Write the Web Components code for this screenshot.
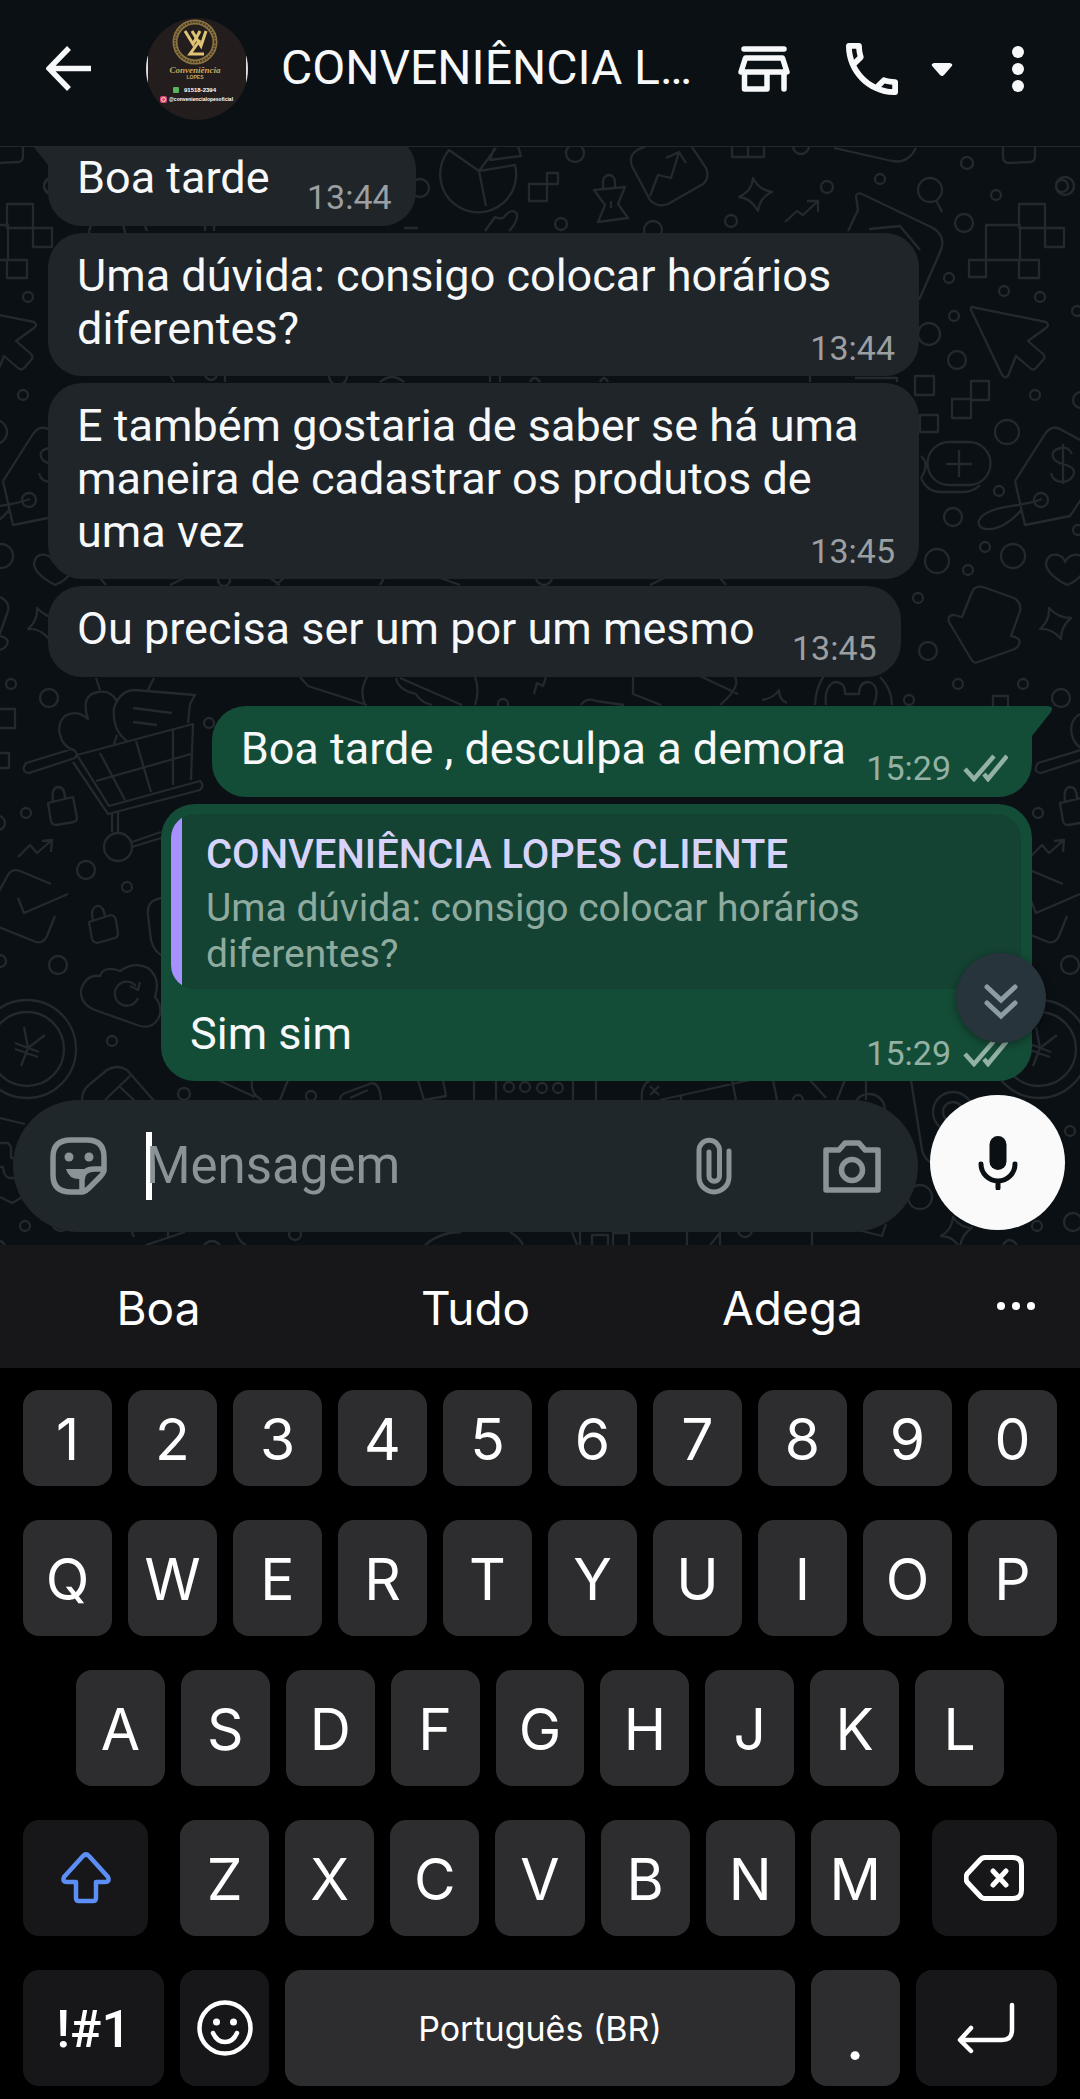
<!DOCTYPE html>
<html lang="pt-BR">
<head>
<meta charset="utf-8">
<meta name="viewport" content="width=device-width, initial-scale=1">
<title>Conversa</title>
<style>
    html, body {
        margin: 0;
        height: 100%;
        background: #000;
        color: #f7f8fa;
        font-family: Roboto, "Liberation Sans", sans-serif;
    }
</style>
</head>
<body>
<chat-app></chat-app>

<script>
const ICONS = {
    back: [45, 45, '<path d="M23 2 3 22.5 23 43M4 22.5H45" fill="none" stroke="currentColor" stroke-width="5.5"/>'],
    store: [52, 46, '<g fill="none" stroke="currentColor" stroke-width="5.5" stroke-linejoin="round" stroke-linecap="round"><path d="M6 3H46M7.5 12H44.5L49 26H3ZM6.5 26V43H29V26M46 28V43"/></g>'],
    phone: [52, 52, '<g transform="scale(2.89) translate(-3 -3)"><path fill="currentColor" d="M6.54 5c.06.89.21 1.76.45 2.59l-1.2 1.2c-.41-1.2-.67-2.47-.76-3.79h1.51m9.86 12.02c.85.24 1.72.39 2.6.45v1.49c-1.32-.09-2.59-.35-3.8-.75l1.2-1.19M7.5 3H4c-.55 0-1 .45-1 1 0 9.39 7.61 17 17 17 .55 0 1-.45 1-1v-3.49c0-.55-.45-1-1-1-1.24 0-2.45-.2-3.57-.57-.1-.04-.21-.05-.31-.05-.26 0-.51.1-.71.29l-2.2 2.2c-2.83-1.45-5.15-3.76-6.59-6.59l2.2-2.2c.28-.28.36-.67.25-1.02C8.7 6.45 8.5 5.25 8.5 4c0-.55-.45-1-1-1z"/></g>'],
    caret: [24, 16, '<path d="M4 2H20Q24 3 21 6L14 14Q12 16 10 14L3 6Q0 3 4 2Z" fill="currentColor"/>'],
    more: [12, 48, '<g fill="currentColor"><circle cx="6" cy="7" r="6"/><circle cx="6" cy="24" r="6"/><circle cx="6" cy="41" r="6"/></g>'],
    sticker: [58, 58, '<g fill="none" stroke="currentColor" stroke-width="5.5" stroke-linejoin="round"><path d="M21 3H37Q54 3 54 20V34Q53 37 50 40L39 51Q36 54 33 55H21Q3 55 3 38V20Q3 3 21 3ZM54 32H45Q32 32 32 43V54"/></g><circle cx="19" cy="20" r="4.5" fill="currentColor"/><circle cx="39" cy="20" r="4.5" fill="currentColor"/><path d="M16 32H38L31 42Q19 43 16 32Z" fill="currentColor"/>'],
    clip: [36, 58, '<path d="M33 14V40A15 15 0 0 1 3 40V13.5A10 10 0 0 1 23.5 13.5V39A5 5 0 0 1 13 39V15" fill="none" stroke="currentColor" stroke-width="5" stroke-linecap="round"/>'],
    camera: [58, 53, '<g fill="none" stroke="currentColor" stroke-width="5.5" stroke-linejoin="round"><path d="M3 10H16L22 3H36L42 10H55V50H3Z"/><circle cx="29" cy="30" r="10.5"/></g>'],
    mic: [40, 54, '<rect x="11.5" width="17" height="34" rx="8.5" fill="currentColor"/><path d="M3 28A17 17 0 0 0 37 28M20 45V52" fill="none" stroke="currentColor" stroke-width="5" stroke-linecap="round"/>'],
    ticks: [45, 28, '<g fill="none" stroke="currentColor" stroke-width="4.5"><path d="M2 15 11 25 31 2M21 20 25 25 44 2"/></g>'],
    down: [34, 37, '<path d="M3 4 17 17 31 4M3 20 17 33 31 20" fill="none" stroke="currentColor" stroke-width="5" stroke-linecap="round"/>'],
    dots: [40, 10, '<g fill="currentColor"><circle cx="5" cy="4" r="4"/><circle cx="20" cy="4" r="4"/><circle cx="35" cy="4" r="4"/></g>'],
    shift: [50, 52, '<path d="M22 4Q25 1 28 4L47 25Q49 30 44 30H35V46Q35 49 32 49H18Q15 49 15 46V30H6Q1 30 3 25Z" fill="none" stroke="currentColor" stroke-width="4.5" stroke-linejoin="round"/>'],
    erase: [60, 46, '<path d="M21 2.5H49Q57.5 2.5 57.5 11V35Q57.5 43.5 49 43.5H21Q18 43.5 16 41L3 27Q1 23 3 19L16 5Q18 2.5 21 2.5ZM29 16 42 30M42 16 29 30" fill="none" stroke="currentColor" stroke-width="5" stroke-linecap="round"/>'],
    smile: [56, 56, '<circle cx="28" cy="28" r="25.5" fill="none" stroke="currentColor" stroke-width="4.5"/><circle cx="19.500" cy="22" r="3.5" fill="currentColor"/><circle cx="36.5" cy="22" r="3.5" fill="currentColor"/><path d="M16 33Q20 42 28 42T40 33" fill="none" stroke="currentColor" stroke-width="4.5" stroke-linecap="round"/>'],
    enter: [58, 52, '<path d="M55 3V28Q55 38 45 38H4M14 26 3 38 14 49" fill="none" stroke="currentColor" stroke-width="4.5" stroke-linecap="round" stroke-linejoin="round"/>']
};

class BaseElement extends HTMLElement {
    constructor() {
        super();
        this._shadowDom = this.attachShadow({mode: 'open'});
    }

    connectedCallback() {
        this.render();
    }
}

class UiIcon extends BaseElement {
    render() {
        const [w, h, body] = ICONS[this.getAttribute('name')];
        this._shadowDom.innerHTML =
        `
        <style>
        :host { display: block; flex: none; }
        svg { display: block; }
        </style>
        <svg width="${w}" height="${h}" viewBox="0 0 ${w} ${h}" aria-hidden="true">${body}</svg>
        `;
    }
}

class ShopAvatar extends BaseElement {
    render() {
        this._shadowDom.innerHTML =
        `
        <style>
        :host { display: block; flex: none; }
        svg { display: block; border-radius: 50%; }
        text { font-family: "Liberation Sans", sans-serif; font-weight: bold; text-anchor: middle; fill: #fff; }
        .script { font-family: "Liberation Serif", serif; font-style: italic; fill: #c9a85c; }
        .gold { fill: #c9a85c; }
        </style>
        <svg width="102" height="102" viewBox="0 0 102 102" role="img" aria-label="Conveniência Lopes">
            <rect width="102" height="102" fill="#231e1d"/>
            <path d="M0 38H2V66H0ZM100 38H102V66H100Z" fill="#ddd"/>
            <circle cx="49" cy="24" r="20" fill="none" stroke="#8b7442" stroke-width="5"/>
            <circle cx="49" cy="24" r="20" fill="none" stroke="#4a3d25" stroke-width="2" stroke-dasharray="2 1"/>
            <path d="M39 13 47 26 54 13M46 13 55 28 60 13M54 22 44 36H58" fill="none" stroke="#e0c476" stroke-width="3"/>
            <text class="script" x="49" y="55" font-size="9">Conveniência</text>
            <text class="gold" x="49" y="61" font-size="5">LOPES</text>
            <rect x="27" y="69" width="6" height="6" rx="1" fill="#57b560"/>
            <text x="54" y="74" font-size="6">91518-2394</text>
            <rect x="14" y="78" width="7" height="7" rx="2" fill="#d6457e"/>
            <circle cx="17.500" cy="81.500" r="2" fill="none" stroke="#ffd9a0"/>
            <text x="55" y="83" font-size="5">@conveniencialopesoficial</text>
        </svg>
        `;
    }
}

class ChatHeader extends BaseElement {
    render() {
        this._shadowDom.innerHTML =
        `
        <style>
        :host {
            display: flex;
            align-items: center;
            flex: none;
            box-sizing: border-box;
            height: 147px;
            padding: 0 56px 9px 46px;
            background: #0b1014;
            border-bottom: 1px solid #22282b;
        }
        h1 {
            flex: 1;
            min-width: 0;
            margin: 0 24px 2px 33px;
            font-size: 48px;
            line-height: 56px;
            font-weight: 400;
            white-space: nowrap;
            overflow: hidden;
        }
        button {
            flex: none;
            display: flex;
            align-items: center;
            padding: 0;
            border: 0;
            background: none;
            color: inherit;
        }
        .back { margin-right: 55px; }
        .call { gap: 32px; margin: 0 58px 0 56px; }
        </style>
        <button class="back" aria-label="Voltar"><ui-icon name="back"></ui-icon></button>
        <shop-avatar></shop-avatar>
        <h1><slot></slot></h1>
        <button aria-label="Loja"><ui-icon name="store"></ui-icon></button>
        <button class="call" aria-label="Ligar"><ui-icon name="phone"></ui-icon><ui-icon name="caret"></ui-icon></button>
        <button aria-label="Mais"><ui-icon name="more"></ui-icon></button>
        `;
    }
}

// small round dots of the wallpaper: x, y, r
const DOTS = [
    [967, 163, 6], [996, 195, 5], [1065, 186, 9], [964, 223, 9], [949, 278, 5], [1004, 291, 5], [1040, 297, 5],
    [954, 316, 5], [929, 334, 11], [957, 360, 9], [1035, 395, 5], [1007, 432, 12], [999, 491, 5], [953, 517, 9],
    [985, 547, 5], [937, 561, 12], [968, 570, 5], [1013, 556, 12], [918, 598, 5], [928, 651, 9], [958, 684, 5],
    [1023, 684, 5], [909, 700, 5], [1061, 698, 9], [1077, 311, 5], [1081, 400, 8], [1078, 530, 5], [880, 179, 5],
    [930, 190, 12], [575, 153, 9], [801, 146, 8], [827, 187, 6], [731, 221, 6], [561, 224, 6], [653, 230, 9],
    [420, 188, 9], [1041, 500, 7], [26, 813, 5], [86, 870, 9], [127, 887, 5], [58, 965, 9], [112, 1041, 5],
    [184, 1094, 6], [209, 723, 5], [0, 961, 6], [-2, 823, 7], [118, 847, 14], [27, 1049, 49], [27, 1049, 37],
    [311, 1096, 5], [509, 1087, 5], [525, 1087, 5], [542, 1088, 5], [558, 1088, 5], [953, 1112, 20], [953, 1112, 10],
    [920, 1197, 12], [1070, 1131, 5], [1037, 1226, 5], [1073, 1222, 9], [503, 704, 5], [107, 234, 18], [338, 376, 9],
    [224, 580, 6], [544, 577, 8], [295, 1234, 6], [745, 1230, 7], [869, 1110, 16], [798, 1100, 5], [50, 186, 6]
];

const DOODLES = [
    // magnifier, pixel blocks, pointer
    'M936 200 942 212', 'M986 225h34v35h-34zM1019 204h26v24h-26zM1045 228h19v19h-19zM969 260h17v17h-17zM1019 260h20v18h-20z',
    'M972 307 1046 322Q1050 325 1046 328L1028 341 1043 354Q1046 357 1043 360L1036 368Q1033 371 1030 368L1016 356 1008 376Q1005 379 1002 375L971 310Q970 307 972 307Z',
    'M915 376h19v19h-19zM971 381h18v19h-18zM952 399h19v19h-19zM920 415h18v17h-18zM993 696h15v15h-15z',
    // plus pill
    'M949 442h20a21 21 0 0 1 0 43h-20a21 21 0 0 1 0-43zM946 464h26M959 450v27M921 456q9 8 0 22M921 478q6 14 20 14h22q10 0 17-7',
    // price tag
    'M1015 481 1045 434Q1051 425 1060 429L1082 441M1015 481 1025 525 1070 516 1082 498M1042 499C1020 508 995 504 981 517C970 532 1000 537 1022 509',
    'M1072 454q-4-8-11-6-10 2-8 9 2 5 10 7 12 3 11 9-2 8-11 9-10 0-12-9M1063 444v40',
    'M1067 585Q1046 574 1046 563 1048 553 1058 555 1064 557 1065 562 1070 553 1079 555 1089 560 1085 569 1080 580 1067 585',
    'M962 617 972 592Q975 585 983 587L1014 598Q1022 603 1020 611L1011 636Q1022 638 1019 644 1018 648 1012 650L978 662Q974 664 971 659L949 622Q947 615 954 615Z',
    'M1049 608Q1058 618 1071 618 1061 626 1061 639 1052 628 1040 629 1050 620 1049 608Z',
    // folded paper and the shapes under the header
    'M848 231 858 210 856 196Q857 192 862 194L933 228Q946 236 941 250L919 300M869 229 900 226 920 250',
    'M529 184h18v17h-18zM547 173h11v11h-11z',
    'M603 188v-6a6 7 0 0 1 12 0v6M594 190 625 187 618 204 628 218 598 222 605 205ZM611 201v7',
    'M645 147Q627 152 632 166L650 200Q658 208 668 204L703 184Q710 178 706 168L692 147M650 196 658 175 671 178 679 152M666 158 679 152 686 163',
    'M732 145v12h32v-12M748 145v12M834 148 892 161Q908 164 916 148M1003 146V158Q1004 163 1009 163L1031 162Q1035 161 1035 156V146',
    'M753 178Q759 190 772 192 760 197 758 211 751 198 739 197 752 191 753 178Z',
    'M785 222 797 211 803 215 818 201M807 201h11v11',
    'M449 150A38 38 0 1 0 515 165L479 171ZM479 171 486 206M479 171 496 148M494 148 490 160 521 156 518 146',
    'M485 231 495 217q6 3 9 0 q8-10 13-3 q1 8-8 17M404 228h14M205 225v6M214 225v6M145 226l2 5',
    'M170 375l4 7M205 376q6 8 12 0M225 375v7M380 382q12-10 24 0M490 375v7M500 375v7M530 382q4-8 10 0M600 382q4-8 8 0M810 375v7M855 378h42v4M100 578l6 7M170 585l14-7M270 578l10 7M284 578l-8 7M380 585l4-7M440 578l20 7M650 585l14-7M720 578l6 7',
    // strip above the first reply
    'M300 677 308 686 367 705M367 677q-8 14-2 28M396 678q2 12 20 16 4 8 16 11M400 678 462 705M475 677q5 14 0 28M534 694l3-11 6 3 3-9M633 676v18l28 11M700 676l38 18M735 677q6 10-15 28M581 705q5-8 15-4l28 4',
    'M762 700q12-2 17-10 0 10 8 13M815 705Q816 686 824 676M880 677q12 12 12 28M826 705q-2-18 8-23 12 0 11 12h14q0-12 10-12 12 4 5 23',
    // left column: heart, note, trolley
    'M75 751C58 745 55 725 65 716Q77 709 88 719 80 695 98 692 112 690 117 702M96 678 100 690M154 678 148 690',
    'M127 741Q112 730 114 708 120 690 135 690L195 695 190 704 188 723M133 708 172 713M133 722 157 725M117 735 114 744',
    'M77 755 193 724 191 780M77 755 109 806 200 781q5 4 0 9L108 814 73 762M100 753 125 800M136 741 151 792M173 730V785M96 781 191 754',
    'M26 763 72 749q7 3 3 9L29 773q-9-1-3-10zM112 813V832M118 812V832M132 842 161 832M132 847 161 838',
    'M48 803 73 797 77 818Q77 821 74 822L56 825Q52 825 51 821ZM53 801q-2-13 5-14 7 0 7 12',
    'M89 922 111 915Q115 916 116 920L118 933Q118 937 115 938L97 943Q93 942 92 939ZM93 920q-3-12 4-14 6-1 8 10',
    'M18 857 30 845 37 853 52 840M42 841 52 840 51 852',
    'M-6 900 8 875Q12 868 20 871L51 884M-6 925 36 942Q43 944 47 936L55 916M18 898 24 913 68 894',
    'M162 898Q146 900 148 915L151 940Q154 952 163 956M-6 709h21v19h-21M-6 753h15v15h-15',
    'M95 1010Q80 1004 81 990 86 974 100 976 104 965 120 971 134 961 148 968 161 978 155 997 164 1008 158 1019 152 1029 140 1026ZM138 998a12 12 0 1 1-2-12M130 986l8 4 2-8',
    'M24 1027 28 1048 45 1035M28 1048 21 1066M15 1043 39 1052M15 1049 38 1057',
    // strip behind the message box
    'M82 1100Q82 1090 90 1084L107 1070Q117 1064 127 1070L155 1102M105 1100 130 1076M119 1086 136 1102',
    'M218 1080 255 1097M252 1080q-2 14 10 20M288 1080 280 1100M340 1100Q340 1094 348 1092L372 1083Q380 1084 381 1100M350 1098 368 1090M418 1080 424 1100 446 1096 443 1080M474 1080V1100M496 1080V1100M573 1080V1100M596 1080V1100',
    'M642 1100q-2-14 8-20M650 1086l9 9M659 1086l-9 9M660 1100 750 1080M681 1096v5M732 1080l4 20M773 1080l4 20M810 1080l16 18M845 1080l-8 20M866 1080v20M911 1080 922 1150q2 8 8 12',
    'M953 1217Q960 1228 972 1228 961 1235 960 1248 953 1236 941 1236 952 1230 953 1217Z',
    'M0 1118 25 1124M0 1143h6q4 0 5 5v10h4M0 1167h3q1 10 6 11h6M0 1197 12 1203 28 1194',
    'M146 1245 185 1232M132 1232l2 5M168 1232v5M204 1245q8-8 16 0M236 1232q3 10 10 13M425 1245q15-13 36-13M510 1232q10 6 13 13M572 1232l5 13M580 1232v13M592 1245v-10h16v10M613 1245v-12h16v12M687 1232v13M710 1245l10-12v12M812 1232v13M858 1230l24 6 4-12M1003 1245q6-10 14 0'
];

class ChatWallpaper extends BaseElement {
    render() {
        this._shadowDom.innerHTML =
        `
        <style>
        :host { display: block; position: absolute; inset: 0; background: #0b1014; }
        svg { display: block; width: 100%; height: 100%; }
        </style>
        <svg viewBox="0 147 1080 1098" preserveAspectRatio="xMinYMin slice" fill="none" stroke="#23292d" stroke-width="2.3" aria-hidden="true">
            <g id="tile">
                ${DOTS.map(([x, y, r]) => `<circle cx="${x}" cy="${y}" r="${r}"/>`).join('')}
                <path stroke-linejoin="round" d="${DOODLES.join('')}"/>
            </g>
            <use href="#tile" x="-1012"/>
            <use href="#tile" x="1012"/>
        </svg>
        `;
    }
}

class QuotedMessage extends BaseElement {
    render() {
        this._shadowDom.innerHTML =
        `
        <style>
        :host {
            display: block;
            padding: 18px 24px 12px 35px;
            border-radius: 24px;
            background: linear-gradient(to right, #a791ff 11px, #144334 11px);
            color: #8fab9f;
            font-size: 39px;
            line-height: 46px;
        }
        strong { display: block; margin-bottom: 7px; font-size: 40px; font-weight: 500; color: #d7d3fb; }
        </style>
        <strong>${this.getAttribute('author')}</strong>
        <slot></slot>
        `;
    }
}

class ChatBubble extends BaseElement {
    render() {
        const out = this.hasAttribute('out');
        this._shadowDom.innerHTML =
        `
        <style>
        :host {
            display: block;
            position: relative;
            box-sizing: border-box;
            flex: none;
            align-self: flex-start;
            max-width: calc(100% - 113px);
            min-height: 91px;
            border-radius: 34px;
            background: #1f2529;
            font-size: 45px;
            line-height: 53px;
        }
        :host([out]) { align-self: flex-end; background: #144d37; }
        :host([tail]) { border-top-left-radius: 0; }
        :host([out][tail]) { border-radius: 34px 0 34px 34px; margin-top: 22px; }
        .body { display: grid; padding: 16px 24px 8px 29px; }
        .text { grid-area: 1 / 1; margin: 0 0 13px; }
        .room { display: inline-block; width: ${out ? 162 : 122}px; }
        .meta {
            grid-area: 1 / 1;
            align-self: end;
            justify-self: end;
            display: flex;
            align-items: center;
            gap: 12px;
            font-size: 34px;
            line-height: 40px;
            color: ${out ? '#93b1a4' : '#9b9fa2'};
        }
        ::slotted(quoted-message) { margin: 10px 11px 2px 10px; }
        .tail { position: absolute; top: 0; right: -20px; fill: #144d37; }
        :host(:not([out])) .tail { right: auto; left: -20px; fill: #1f2529; transform: scaleX(-1); }
        </style>
        ${this.hasAttribute('tail') ? '<svg class="tail" width="20" height="30"><path d="M0 0H16Q22 1 19 6L0 30Z"/></svg>' : ''}
        <slot name="quote"></slot>
        <div class="body">
            <p class="text"><slot></slot><span class="room"></span></p>
            <div class="meta"><time>${this.getAttribute('time')}</time>${out ? '<ui-icon name="ticks"></ui-icon>' : ''}</div>
        </div>
        `;
    }
}

class MessageComposer extends BaseElement {
    render() {
        this._shadowDom.innerHTML =
        `
        <style>
        :host {
            display: flex;
            align-items: flex-start;
            flex: none;
            gap: 12px;
            position: relative;
            padding: 14px 15px 13px 13px;
        }
        .box {
            flex: 1;
            min-width: 0;
            display: flex;
            align-items: center;
            box-sizing: border-box;
            height: 132px;
            margin-top: 5px;
            padding: 0 37px;
            border-radius: 66px;
            background: #20272a;
            color: #8b9397;
        }
        button { flex: none; padding: 0; border: 0; background: none; color: inherit; }
        .caret { flex: none; width: 6px; height: 68px; margin: 0 -6px 0 38px; background: #fff; }
        input {
            flex: 1;
            min-width: 0;
            height: 68px;
            padding: 0;
            border: 0;
            outline: 0;
            background: none;
            color: #f7f8fa;
            font: 51px/68px Roboto, "Liberation Sans", sans-serif;
        }
        input::placeholder { color: #8b9397; opacity: 1; }
        .clip { margin-right: 91px; }
        .mic {
            display: grid;
            place-items: center;
            width: 135px;
            height: 135px;
            border-radius: 50%;
            background: #fafafa;
            color: #0b1014;
        }
        </style>
        <div class="box">
            <button aria-label="Figurinhas"><ui-icon name="sticker"></ui-icon></button>
            <span class="caret"></span>
            <input type="text" placeholder="Mensagem" aria-label="Mensagem">
            <button class="clip" aria-label="Anexar"><ui-icon name="clip"></ui-icon></button>
            <button aria-label="Câmera"><ui-icon name="camera"></ui-icon></button>
        </div>
        <button class="mic" aria-label="Gravar áudio"><ui-icon name="mic"></ui-icon></button>
        `;
    }
}

class ChatThread extends BaseElement {
    render() {
        this._shadowDom.innerHTML =
        `
        <style>
        :host {
            display: flex;
            flex-direction: column;
            flex: 1;
            min-height: 0;
            position: relative;
            overflow: hidden;
        }
        .list {
            display: flex;
            flex-direction: column;
            justify-content: flex-end;
            gap: 7px;
            flex: 1;
            min-height: 0;
            position: relative;
            padding: 0 48px;
        }
        /* floats over the last message */
        .latest {
            position: absolute;
            right: 34px;
            bottom: 38px;
            display: grid;
            place-items: center;
            width: 90px;
            height: 90px;
            padding: 6px 0 0;
            border: 0;
            border-radius: 50%;
            background: #28343b;
            color: #8d9ba3;
            box-shadow: 0 2px 8px rgba(0, 0, 0, .4);
        }
        </style>
        <chat-wallpaper></chat-wallpaper>
        <div class="list">
            <slot></slot>
            <button class="latest" aria-label="Ir para a última mensagem"><ui-icon name="down"></ui-icon></button>
        </div>
        <message-composer></message-composer>
        `;
    }
}

class SuggestionBar extends BaseElement {
    render() {
        this._shadowDom.innerHTML =
        `
        <style>
        :host { display: flex; flex: none; height: 123px; background: #171719; }
        button {
            flex: 1;
            display: grid;
            place-items: center;
            padding: 2px 0 0;
            border: 0;
            background: none;
            color: #fff;
            font: 46px/56px Inter, Roboto, sans-serif;
        }
        .more { flex: 0 0 129px; padding: 0; }
        </style>
        ${this.getAttribute('words').split(' ').map(w => `<button>${w}</button>`).join('')}
        <button class="more" aria-label="Mais sugestões"><ui-icon name="dots"></ui-icon></button>
        `;
    }
}

class KeyCap extends BaseElement {
    render() {
        const icon = this.getAttribute('icon');
        this._shadowDom.innerHTML =
        `
        <style>
        :host { display: block; flex: 89 1 0; min-width: 0; }
        button {
            display: grid;
            place-items: center;
            box-sizing: border-box;
            width: 100%;
            height: 100%;
            padding: 4px 0 0;
            border: 0;
            border-radius: 16px;
            background: #2d2d2f;
            color: #fff;
            font: 57px/70px Inter, Roboto, sans-serif;
        }
        :host([dark]) button { background: #171719; }
        :host([icon]) button { padding: 0; }
        :host([accent]) button { color: #5c8ff5; }
        :host([space]) button { font-size: 34px; padding: 2px 0 0; }
        :host([low]) button { padding-top: 24px; font-weight: 600; }
        :host([symbols]) button { font: 500 52px/62px Roboto, sans-serif; }
        </style>
        <button${icon ? ` aria-label="${this.getAttribute('label')}"` : ''}>${icon ? `<ui-icon name="${icon}"></ui-icon>` : '<slot></slot>'}</button>
        `;
    }
}

class ScreenKeyboard extends BaseElement {
    render() {
        const keys = row => [...row].map(k => `<key-cap>${k}</key-cap>`).join('');
        this._shadowDom.innerHTML =
        `
        <style>
        :host {
            display: flex;
            flex-direction: column;
            flex: none;
            gap: 34px;
            padding: 22px 23px 13px;
            background: #000;
        }
        .row { display: flex; gap: 16px; height: 116px; }
        .digits { height: 96px; }
        .home { padding: 0 53px; }
        .wide { flex-grow: 125; }
        .wide:first-child { margin-right: 16px; }
        .wide:last-child { margin-left: 16px; }
        .side { flex-grow: 141; }
        .space { flex-grow: 508; }
        </style>
        <div class="row digits">${keys('1234567890')}</div>
        <div class="row">${keys('QWERTYUIOP')}</div>
        <div class="row home">${keys('ASDFGHJKL')}</div>
        <div class="row">
            <key-cap class="wide" dark accent icon="shift" label="Maiúsculas"></key-cap>
            ${keys('ZXCVBNM')}
            <key-cap class="wide" dark icon="erase" label="Apagar"></key-cap>
        </div>
        <div class="row">
            <key-cap class="side" dark symbols>!#1</key-cap>
            <key-cap dark icon="smile" label="Emojis"></key-cap>
            <key-cap class="space" space>Português (BR)</key-cap>
            <key-cap low>.</key-cap>
            <key-cap class="side" dark icon="enter" label="Enter"></key-cap>
        </div>
        `;
    }
}

class ChatApp extends BaseElement {
    render() {
        this._shadowDom.innerHTML =
        `
        <style>
        :host { display: flex; flex-direction: column; height: 100vh; overflow: hidden; }
        </style>
        <chat-header>CONVENIÊNCIA L…</chat-header>
        <chat-thread>
            <chat-bubble tail time="13:44">Boa tarde</chat-bubble>
            <chat-bubble time="13:44">Uma dúvida: consigo colocar horários diferentes?</chat-bubble>
            <chat-bubble time="13:45">E também gostaria de saber se há uma maneira de cadastrar os produtos de uma vez</chat-bubble>
            <chat-bubble time="13:45">Ou precisa ser um por um mesmo</chat-bubble>
            <chat-bubble out tail time="15:29">Boa tarde , desculpa a demora</chat-bubble>
            <chat-bubble out time="15:29"><quoted-message slot="quote" author="CONVENIÊNCIA LOPES CLIENTE">Uma dúvida: consigo colocar horários diferentes?</quoted-message>Sim sim</chat-bubble>
        </chat-thread>
        <suggestion-bar words="Boa Tudo Adega"></suggestion-bar>
        <screen-keyboard></screen-keyboard>
        `;
    }
}

customElements.define('ui-icon', UiIcon);
customElements.define('shop-avatar', ShopAvatar);
customElements.define('chat-header', ChatHeader);
customElements.define('chat-wallpaper', ChatWallpaper);
customElements.define('quoted-message', QuotedMessage);
customElements.define('chat-bubble', ChatBubble);
customElements.define('message-composer', MessageComposer);
customElements.define('chat-thread', ChatThread);
customElements.define('suggestion-bar', SuggestionBar);
customElements.define('key-cap', KeyCap);
customElements.define('screen-keyboard', ScreenKeyboard);
customElements.define('chat-app', ChatApp);
</script>
</body>
</html>
